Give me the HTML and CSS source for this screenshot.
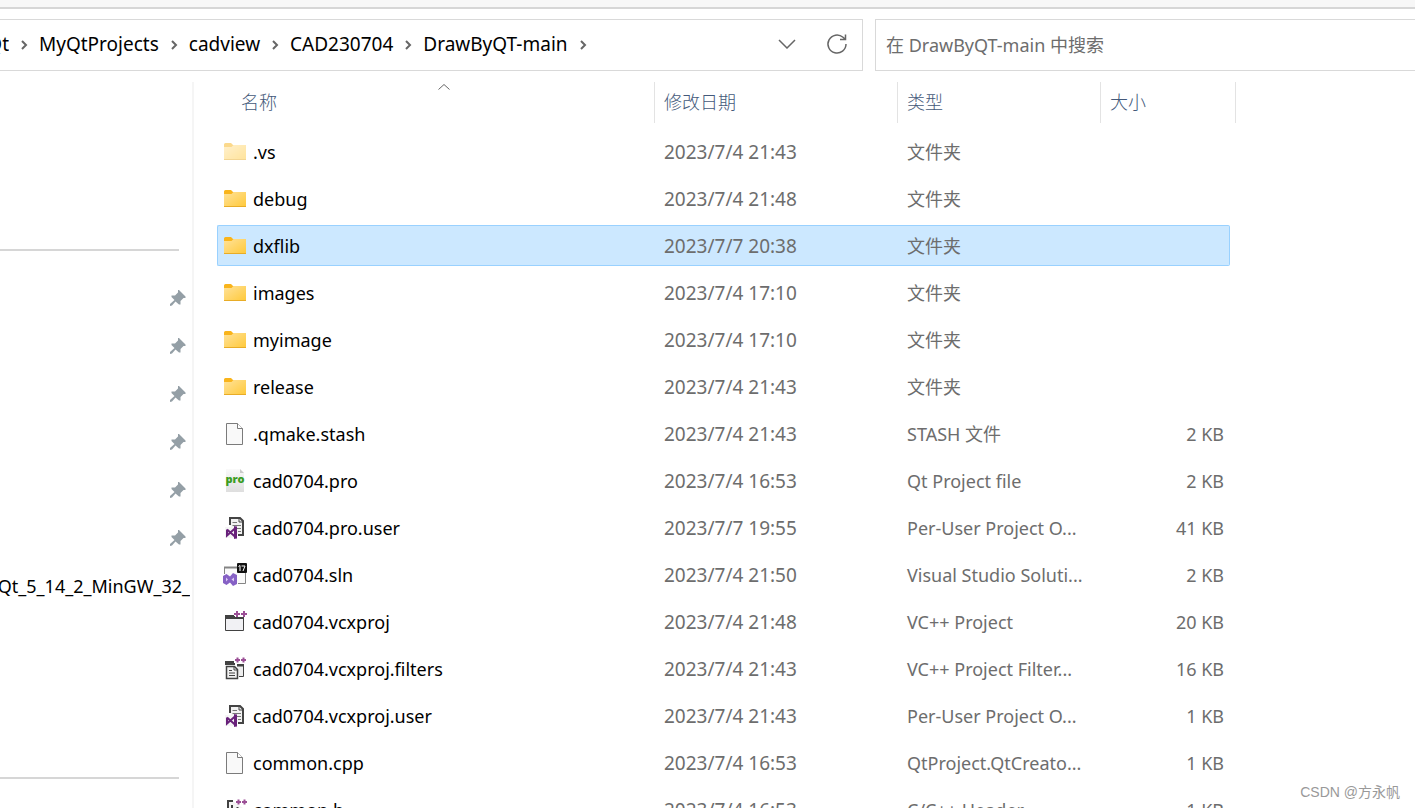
FILE: index.html
```html
<!DOCTYPE html>
<html lang="zh-CN">
<head>
<meta charset="utf-8">
<title>DrawByQT-main</title>
<link rel="stylesheet" href="styles.css">
</head>
<body>
<svg class="defs" aria-hidden="true">
  <defs>
    <linearGradient id="gold" x1="0" y1="0" x2="1" y2="1"><stop offset="0" stop-color="#ffe29a"/><stop offset="1" stop-color="#ffc939"/></linearGradient>
    <linearGradient id="paper" x1="0" y1="0" x2="0" y2="1"><stop offset="0" stop-color="#fafafa"/><stop offset="1" stop-color="#dedede"/></linearGradient>
    <symbol id="folder" viewBox="0 0 24 24">
      <path d="M1 4.5Q1 3 2.5 3H8L10 5H23V10H1Z" fill="#f9b41b"/>
      <path d="M1 7H8.5L10.500 5H23V20H1Z" fill="url(#gold)"/>
      <path d="M1 19.500H23" stroke="#e8ac27"/>
    </symbol>
    <symbol id="file" viewBox="0 0 24 24">
      <path d="M3.500 1.500H14.500L19.500 6.500V22.500H3.500Z" fill="#f9f9f9" stroke="#7b7b7b"/>
      <path d="M14.500 1.500V6.500H19.500" fill="#fff" stroke="#7b7b7b"/>
    </symbol>
    <symbol id="pro" viewBox="0 0 24 24">
      <path d="M3 0H17L21 4V23H3Z" fill="url(#paper)"/>
      <path d="M17 0V4H21Z" fill="#c9c9c9"/>
      <text x="12" y="14" text-anchor="middle" class="pro-label">pro</text>
    </symbol>
    <symbol id="user" viewBox="0 0 24 24">
      <path d="M7 9V2H17L20 5V19H15" fill="#f2f2f2" stroke="#444" stroke-width="2"/>
      <path d="M16 2V6H20" fill="none" stroke="#444"/>
      <path d="M9.500 6.500H14M9.500 9.500H18M14 12.500H18M15 15.500H18" stroke="#777"/>
      <path d="M2 11H14V22H2Z" fill="#f5f5f5"/>
      <path d="M4 13.500V19.500L12.500 12V21L4 13.500" fill="none" stroke="#68217a" stroke-width="2"/>
      <path d="M11 10L14 11V22L11 23Z" fill="#68217a"/>
    </symbol>
    <symbol id="sln" viewBox="0 0 24 24">
      <path d="M1.500 11V4.500H22.500V20.500H15" fill="#fafafa" stroke="#858585"/>
      <path d="M1 4.500H14" stroke="#858585" stroke-width="2"/>
      <path d="M0 13L3.500 11L7 13.500L10 10L14 12V21L10 23L7 19.500L3.500 22L0 20Z" fill="#8661c5"/>
      <path d="M3 14.500V18.500L5 16.500ZM11 14.500V18.500L8.500 16.500Z" fill="#dccbf5"/>
      <rect x="14" y="0" width="10" height="10" rx="1" fill="#111"/>
      <path d="M15.500 3.500L17 2.500V8M18.500 3H22L20 8" fill="none" stroke="#fff"/>
    </symbol>
    <symbol id="vcx" viewBox="0 0 24 24">
      <path d="M2.500 6.500H20.500V20.500H2.500Z" fill="#f1f1f4" stroke="#424242"/>
      <path d="M2 5H11V7H21V9H2Z" fill="#424242"/>
      <path d="M12 0H24V7H12Z" fill="#fff"/>
      <path d="M11 4H17M14 1V7M18 4H24M21 1V7" stroke="#9b4f96" stroke-width="2"/>
    </symbol>
    <symbol id="filters" viewBox="0 0 24 24">
      <path d="M2 4H11V6H12V8H2Z" fill="#424242"/>
      <path d="M14 9H20.500V19.500H16" fill="#eee" stroke="#424242"/>
      <path d="M3.500 9.500H11.500L14.500 12.500V21.500H3.500Z" fill="#f1f1f1" stroke="#424242" stroke-width="1.500"/>
      <path d="M11 9V13H15" fill="none" stroke="#424242"/>
      <path d="M6 13.500H9M6 16H12M6 18.500H12" stroke="#424242"/>
      <path d="M12 3H17M14.500 0.500V5.500M18 3H23M20.500 0.500V5.500" stroke="#9b4f96" stroke-width="2"/>
      <path d="M14 7H21V9H14Z" fill="#424242"/>
    </symbol>
    <symbol id="header" viewBox="0 0 24 24">
      <path d="M10 3H5V22H20V10" fill="#f4f4f4" stroke="#424242" stroke-width="2"/>
      <path d="M9 7V15M14.500 9V15M9 11.500H14" stroke="#424242" stroke-width="2"/>
      <path d="M13 4H18M15.500 1.500V6.500M19 4H24M21.500 1.500V6.500" stroke="#9b4f96" stroke-width="2"/>
    </symbol>
    <symbol id="pin" viewBox="0 0 16 16">
      <path d="M9 0L15.500 6.500V8H13.500L10.500 11V14.500H9L5.500 11.500L2 15.500L0 16V14L4.500 10L1.500 7V5.500H5L8 2.500V0Z" fill="#949fa6"/>
    </symbol>
    <symbol id="sep" viewBox="0 0 8 10"><path d="M2 1L6 5L2 9" fill="none" stroke="#666" stroke-width="2"/></symbol>
  </defs>
</svg>

<div class="ribbon-edge"></div>
<header class="toolbar">
  <nav class="address" aria-label="路径">
    <button class="crumb crumb-cut">Qt</button>
    <svg class="sep"><use href="#sep"/></svg>
    <button class="crumb">MyQtProjects</button>
    <svg class="sep"><use href="#sep"/></svg>
    <button class="crumb">cadview</button>
    <svg class="sep"><use href="#sep"/></svg>
    <button class="crumb">CAD230704</button>
    <svg class="sep"><use href="#sep"/></svg>
    <button class="crumb">DrawByQT-main</button>
    <svg class="sep"><use href="#sep"/></svg>
    <div class="tools">
      <button class="tool" aria-label="历史"><svg width="18" height="10" viewBox="0 0 18 10"><path d="M1 1L9 9L17 1" fill="none" stroke="#666" stroke-width="1.500"/></svg></button>
      <button class="tool" aria-label="刷新"><svg width="22" height="22" viewBox="0 0 22 22"><path d="M20 11A9 9 0 1 1 17 4.300L19.500 6.500M19.500 1.500V6.500H14" fill="none" stroke="#666" stroke-width="1.500"/></svg></button>
    </div>
  </nav>
  <input class="search" type="search" aria-label="搜索" placeholder="在 DrawByQT-main 中搜索">
</header>

<div class="panes">
  <aside class="sidebar">
    <hr class="rule">
    <ul class="quick">
      <li><svg class="pin"><use href="#pin"/></svg></li>
      <li><svg class="pin"><use href="#pin"/></svg></li>
      <li><svg class="pin"><use href="#pin"/></svg></li>
      <li><svg class="pin"><use href="#pin"/></svg></li>
      <li><svg class="pin"><use href="#pin"/></svg></li>
      <li><svg class="pin"><use href="#pin"/></svg></li>
      <li class="place"><span>Qt_5_14_2_MinGW_32_</span></li>
    </ul>
    <hr class="rule">
  </aside>
  <main class="listing">
    <table class="files">
      <colgroup><col class="c-name"><col class="c-date"><col class="c-type"><col class="c-size"><col class="c-end"></colgroup>
      <thead>
        <tr>
          <th><div class="head head-name">名称<svg class="caret" width="12" height="6" viewBox="0 0 12 6"><path d="M0.500 5.500L6 0.500L11.500 5.500" fill="none" stroke="#666"/></svg></div></th>
          <th><div class="head">修改日期</div></th>
          <th><div class="head">类型</div></th>
          <th class="open"><div class="head">大小</div></th>
          <td><div class="head"></div></td>
        </tr>
      </thead>
      <tbody>
        <tr><td><div class="name"><svg class="icon faded"><use href="#folder"/></svg>.vs</div></td><td>2023/7/4 21:43</td><td>文件夹</td><td></td></tr>
        <tr><td><div class="name"><svg class="icon"><use href="#folder"/></svg>debug</div></td><td>2023/7/4 21:48</td><td>文件夹</td><td></td></tr>
        <tr class="selected"><td><div class="name"><svg class="icon"><use href="#folder"/></svg>dxflib</div></td><td>2023/7/7 20:38</td><td>文件夹</td><td></td></tr>
        <tr><td><div class="name"><svg class="icon"><use href="#folder"/></svg>images</div></td><td>2023/7/4 17:10</td><td>文件夹</td><td></td></tr>
        <tr><td><div class="name"><svg class="icon"><use href="#folder"/></svg>myimage</div></td><td>2023/7/4 17:10</td><td>文件夹</td><td></td></tr>
        <tr><td><div class="name"><svg class="icon"><use href="#folder"/></svg>release</div></td><td>2023/7/4 21:43</td><td>文件夹</td><td></td></tr>
        <tr><td><div class="name"><svg class="icon"><use href="#file"/></svg>.qmake.stash</div></td><td>2023/7/4 21:43</td><td>STASH 文件</td><td>2 KB</td></tr>
        <tr><td><div class="name"><svg class="icon"><use href="#pro"/></svg>cad0704.pro</div></td><td>2023/7/4 16:53</td><td>Qt Project file</td><td>2 KB</td></tr>
        <tr><td><div class="name"><svg class="icon"><use href="#user"/></svg>cad0704.pro.user</div></td><td>2023/7/7 19:55</td><td>Per-User Project O...</td><td>41 KB</td></tr>
        <tr><td><div class="name"><svg class="icon"><use href="#sln"/></svg>cad0704.sln</div></td><td>2023/7/4 21:50</td><td>Visual Studio Soluti...</td><td>2 KB</td></tr>
        <tr><td><div class="name"><svg class="icon"><use href="#vcx"/></svg>cad0704.vcxproj</div></td><td>2023/7/4 21:48</td><td>VC++ Project</td><td>20 KB</td></tr>
        <tr><td><div class="name"><svg class="icon"><use href="#filters"/></svg>cad0704.vcxproj.filters</div></td><td>2023/7/4 21:43</td><td>VC++ Project Filter...</td><td>16 KB</td></tr>
        <tr><td><div class="name"><svg class="icon"><use href="#user"/></svg>cad0704.vcxproj.user</div></td><td>2023/7/4 21:43</td><td>Per-User Project O...</td><td>1 KB</td></tr>
        <tr><td><div class="name"><svg class="icon"><use href="#file"/></svg>common.cpp</div></td><td>2023/7/4 16:53</td><td>QtProject.QtCreato...</td><td>1 KB</td></tr>
        <tr><td><div class="name"><svg class="icon"><use href="#header"/></svg>common.h</div></td><td>2023/7/4 16:53</td><td>C/C++ Header</td><td>1 KB</td></tr>
      </tbody>
    </table>
  </main>
</div>
<div class="watermark">CSDN @方永帆</div>
</body>
</html>
```
FILE: styles.css
```css
* { box-sizing: border-box; }

body {
  margin: 0;
  height: 100vh;
  overflow: hidden;
  position: relative;
  display: flex;
  flex-direction: column;
  background: #fff;
  color: #000;
  font-family: "Noto Sans", "Noto Sans CJK SC", sans-serif;
  font-size: 18px;
  line-height: 24px;
}

button {
  border: 0;
  padding: 0;
  background: none;
  color: inherit;
  font: inherit;
}

.defs { position: absolute; width: 0; height: 0; }

.ribbon-edge {
  flex: none;
  height: 9px;
  background: #f7f7f7;
  border-bottom: 2px solid #d6d6d6;
}

.toolbar {
  flex: none;
  display: grid;
  grid-template-columns: minmax(0, 863fr) minmax(0, 540fr);
  gap: 12px;
  padding-top: 10px;
}

.address {
  display: flex;
  align-items: center;
  height: 52px;
  padding-bottom: 2px;
  border: 1px solid #d9d9d9;
  border-left: 0;
  font-size: 19px;
}

.crumb { white-space: nowrap; }
.crumb-cut {
  display: flex;
  justify-content: flex-end;
  width: 9px;
  overflow: hidden;
}

.sep {
  flex: none;
  width: 8px;
  height: 10px;
  margin: 2px 11px 0;
}

.tools {
  display: flex;
  align-items: center;
  gap: 30px;
  margin-left: auto;
  padding-right: 14px;
}
.tool { display: flex; }

.search {
  width: 100%;
  height: 52px;
  padding: 0 10px;
  border: 1px solid #d9d9d9;
  border-right: 0;
  border-radius: 0;
  background: #fff;
  font: inherit;
  outline: 0;
  appearance: none;
}
.search::placeholder { color: #6d6d6d; opacity: 1; }

.panes {
  flex: 1;
  min-height: 0;
  display: flex;
  padding-top: 5px;
}

.sidebar {
  flex: none;
  width: 194px;
  margin-top: 6px;
  overflow: hidden;
  border-right: 2px solid #f5f5f5;
}

.rule {
  height: 2px;
  margin: 167px 13px 0 0;
  border: 0;
  background: #d6d6d6;
}

.quick {
  margin: 23px 0 0;
  padding: 0 6px 0 0;
  list-style: none;
}
.quick li {
  display: flex;
  align-items: center;
  justify-content: flex-end;
  height: 48px;
}
.quick .place {
  margin-right: -4px;
  overflow: hidden;
}
.pin { width: 16px; height: 16px; }

.listing {
  flex: 1;
  min-width: 0;
  padding-left: 23px;
  overflow: hidden;
}

.files {
  width: 1019px;
  table-layout: fixed;
  border-spacing: 0 6px;
}
.c-name { width: 438px; }
.c-date { width: 243px; }
.c-type { width: 203px; }
.c-size { width: 129px; }
.c-end { width: 6px; }

.files th,
.files thead td {
  height: 43px;
  padding: 0;
  vertical-align: top;
  text-align: left;
  font-weight: 300;
  color: #44597a;
}
.head {
  position: relative;
  height: 41px;
  padding-left: 9px;
  line-height: 41px;
  border-right: 1px solid #e3e3e3;
}
.head-name { padding-left: 24px; }
.open .head { border-right: 0; }
.files thead td .head { padding: 0; }
.caret {
  position: absolute;
  top: 2px;
  left: 221px;
}

.files tbody td {
  height: 41px;
  padding: 0 0 0 9px;
  border: solid transparent;
  border-width: 1px 0;
  color: #6d6d6d;
  white-space: nowrap;
}
.files tbody td:first-child { padding-left: 5px; border-left-width: 1px; color: #000; }
.files tbody td:nth-child(2) { font-size: 19px; }
.files tbody td:nth-child(4) { padding-right: 5px; border-right-width: 1px; text-align: right; }

.files .selected td { background: #cce8ff; border-color: #99d1ff; }
.files .selected td:first-child { border-radius: 2px 0 0 2px; }
.files .selected td:nth-child(4) { border-radius: 0 2px 2px 0; }

.name {
  display: flex;
  align-items: center;
  gap: 6px;
}
.icon { flex: none; width: 24px; height: 24px; }
.faded { opacity: 0.5; }
.pro-label {
  font: 800 11px "Open Sans", sans-serif;
  fill: #3a9d23;
}

.watermark {
  position: absolute;
  right: 15px;
  bottom: 4px;
  color: #999;
  font-family: "Liberation Sans", "Noto Sans CJK SC", sans-serif;
  font-size: 14px;
}
```
